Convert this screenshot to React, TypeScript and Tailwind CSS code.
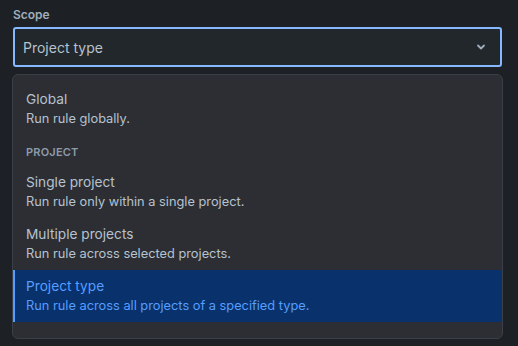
import React from 'react'

type Option = { title: string; desc: string; selected?: boolean }

const projectOptions: Option[] = [
  { title: 'Single project', desc: 'Run rule only within a single project.' },
  { title: 'Multiple projects', desc: 'Run rule across selected projects.' },
  { title: 'Project type', desc: 'Run rule across all projects of a specified type.', selected: true },
]

const Item = ({ title, desc, selected }: Option) => (
  <div
    className={`flex flex-col h-[52px] justify-center pl-[11px] border-l-2 ${
      selected ? 'bg-[#09326c] border-[#579dff] text-[#579dff]' : 'border-transparent text-[#b6c2cf]'
    }`}
  >
    <span className="text-[13.7px] leading-[20px]">{title}</span>
    <span className="text-[12.8px] leading-[20px]">{desc}</span>
  </div>
)

export default function App() {
  return (
    <div
      className="w-[518px] h-[346px] bg-[#1d2125] overflow-hidden"
      style={{ fontFamily: 'Inter, "Noto Sans", sans-serif' }}
    >
      <div className="pl-[13px] pr-[16px] pt-[7px]">
        <div className="text-[12px] font-semibold leading-[16px] text-[#9fadbc] mb-[4px]">Scope</div>
        <div className="h-[40px] rounded-[3px] border-2 border-[#85b8ff] bg-[#22272b] flex items-center justify-between pl-[8px] pr-[14px]">
          <span className="text-[14px] text-[#b6c2cf]">Project type</span>
          <svg width="10" height="10" viewBox="0 0 10 10" className="text-[#9fadbc]">
            <path d="M2 3.5 L5 6.5 L8 3.5" fill="none" stroke="currentColor" strokeWidth="1.8" strokeLinecap="round" strokeLinejoin="round" />
          </svg>
        </div>
      </div>
      <div className="ml-[12px] mr-[15px] mt-[7px] h-[265px] rounded-[6px] border border-[#3b4048] bg-[#2c2e33] pt-[8px] overflow-hidden">
        <Item title="Global" desc="Run rule globally." />
        <div className="h-[31px] flex items-center pl-[13px] pt-[3px] text-[11px] font-semibold tracking-[0.2px] text-[#8c9bab]">
          PROJECT
        </div>
        {projectOptions.map((o) => (
          <Item key={o.title} {...o} />
        ))}
      </div>
    </div>
  )
}
